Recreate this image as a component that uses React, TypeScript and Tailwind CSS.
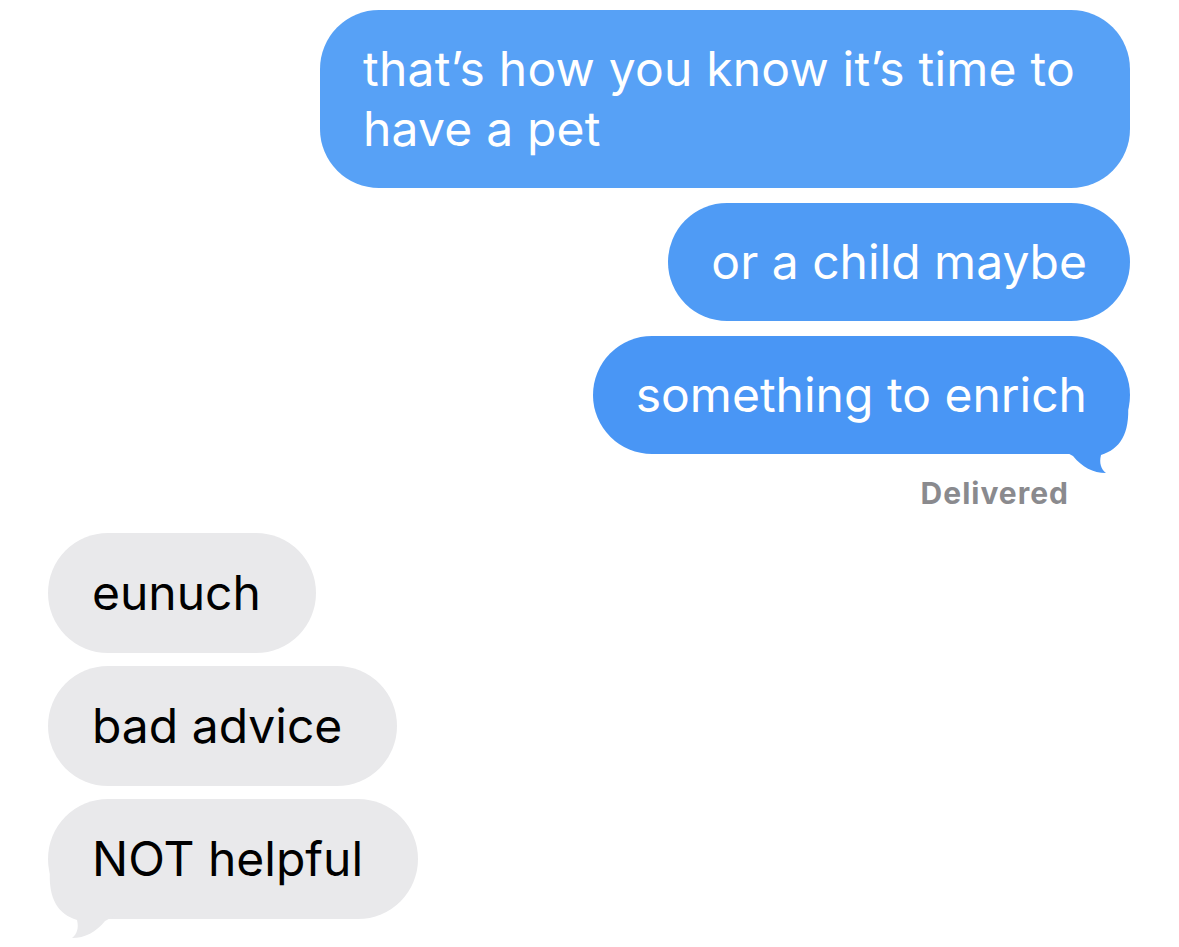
import React from "react";

const font = { fontFamily: "Inter, 'Noto Sans', sans-serif" };

function BlueTail() {
  return (
    <svg className="absolute right-0 -bottom-[20px] w-[70px] h-[70px]" viewBox="0 0 70 70">
      <path
        d="M68 0 C70 30 60 45 41 51 C39 59 41 65 46 69 C33 69 22 63 13 52 L0 45 L0 0 Z"
        fill="#4996f5"
      />
    </svg>
  );
}

function GrayTail() {
  return (
    <svg className="absolute left-0 -bottom-[20px] w-[70px] h-[70px]" viewBox="0 0 70 70">
      <path
        d="M2 0 C0 30 10 45 29 51 C31 59 29 65 24 69 C37 69 48 63 57 52 L70 45 L70 0 Z"
        fill="#e9e9eb"
      />
    </svg>
  );
}

function Sent({ text, className = "", tail = false, color }: { text: string; className?: string; tail?: boolean; color: string }) {
  return (
    <div className={`relative rounded-[59px] px-[43px] py-[29px] text-white text-[48px] leading-[60px] ${color} ${className}`}>
      {tail && <BlueTail />}
      <span className="relative">{text}</span>
    </div>
  );
}

function Received({ text, tail = false }: { text: string; tail?: boolean }) {
  return (
    <div className="relative w-fit rounded-[60px] bg-[#e9e9eb] pl-[44px] pr-[55px] py-[30px] text-black text-[48px] leading-[60px]">
      {tail && <GrayTail />}
      <span className="relative">{text}</span>
    </div>
  );
}

export default function App() {
  return (
    <div className="w-full h-[947px] bg-white overflow-hidden pl-[48px] pr-[49px] pt-[10px]" style={font}>
      <div className="flex flex-col items-end gap-[15px]">
        <Sent
          text="that’s how you know it’s time to have a pet"
          className="w-[810px] rounded-[55px] tracking-[0.2px]"
          color="bg-[#57a1f6]"
        />
        <Sent text="or a child maybe" color="bg-[#4f9bf5]" />
        <Sent text="something to enrich" color="bg-[#4996f5]" tail />
      </div>
      <div className="flex justify-end pr-[61px] mt-[22px]">
        <span className="text-[30px] font-bold tracking-[1px] text-[#8a8a8e] leading-[34px]">Delivered</span>
      </div>
      <div className="flex flex-col items-start gap-[13px] mt-[23px]">
        <Received text="eunuch" />
        <Received text="bad advice" />
        <Received text="NOT helpful" tail />
      </div>
    </div>
  );
}
